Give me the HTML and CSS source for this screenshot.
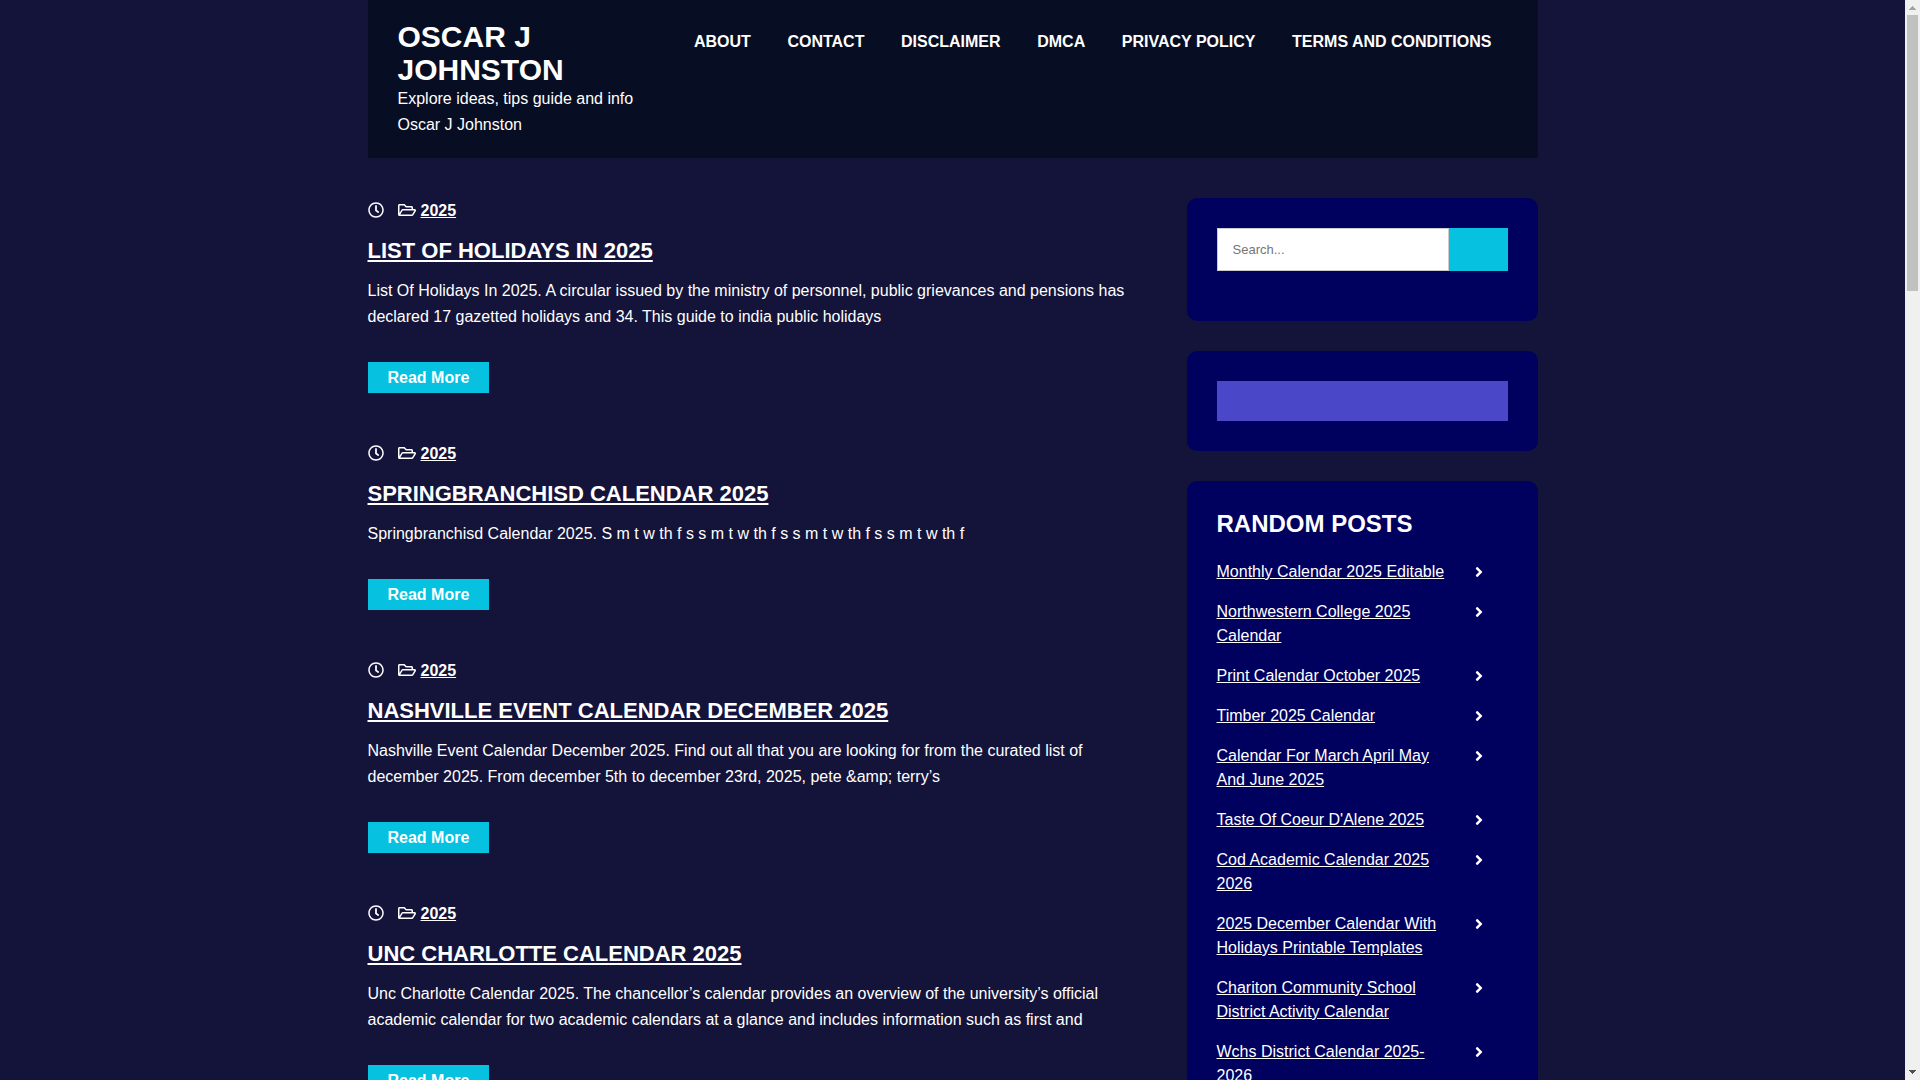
FILE: index.html
```html
<!DOCTYPE html>
<html lang="en">
<head>
<meta charset="utf-8">
<meta name="viewport" content="width=device-width, initial-scale=1">
<title>Oscar J Johnston</title>
<link rel="stylesheet" href="styles.css">
</head>
<body>
<svg class="sprite" aria-hidden="true">
  <symbol id="clock" viewBox="0 0 512 512"><path d="M256 8C119 8 8 119 8 256s111 248 248 248 248-111 248-248S393 8 256 8zm0 448c-110.500 0-200-89.500-200-200S145.500 56 256 56s200 89.500 200 200-89.500 200-200 200zm61.800-104.400l-84.900-61.700c-3.100-2.300-4.900-5.900-4.900-9.700V116c0-6.600 5.400-12 12-12h32c6.600 0 12 5.400 12 12v141.700l66.800 48.600c5.400 3.900 6.500 11.400 2.600 16.800L334.600 349c-3.900 5.300-11.400 6.500-16.800 2.600z"/></symbol>
  <symbol id="folder" viewBox="0 0 576 512"><path d="M527.900 224H480v-48c0-26.500-21.500-48-48-48H272l-64-64H48C21.500 64 0 85.500 0 112v288c0 26.500 21.500 48 48 48h400c16.500 0 31.900-8.500 40.700-22.600l79.900-128c20-31.900-3-73.400-40.700-73.400zM48 118c0-3.300 2.700-6 6-6h134.100l64 64H426c3.300 0 6 2.700 6 6v42H152c-16.800 0-32.400 8.800-41.100 23.200L48 351.400zm400 282H72l77.200-128H528z"/></symbol>
  <symbol id="chevron" viewBox="0 0 256 512"><path d="M224.300 273l-136 136c-9.400 9.400-24.600 9.400-33.900 0l-22.600-22.600c-9.400-9.400-9.400-24.600 0-33.900l96.400-96.400-96.400-96.400c-9.400-9.400-9.400-24.600 0-33.900L54.300 103c9.400-9.400 24.600-9.400 33.900 0l136 136c9.500 9.400 9.500 24.600.1 34z"/></symbol>
</svg>
<div class="window">
  <div class="page">
    <div class="container">
      <header class="header">
        <div class="brand">
          <h1 class="site-title"><a href="#">Oscar J Johnston</a></h1>
          <p class="tagline">Explore ideas, tips guide and info Oscar J Johnston</p>
        </div>
        <nav class="nav" aria-label="Main">
          <a href="#">About</a>
          <a href="#">Contact</a>
          <a href="#">Disclaimer</a>
          <a href="#">DMCA</a>
          <a href="#">Privacy Policy</a>
          <a href="#">Terms and Conditions</a>
        </nav>
      </header>
      <div class="columns">
        <main class="posts">
          <article class="post">
            <div class="meta"><svg class="icon-clock"><use href="#clock"/></svg><svg class="icon-folder"><use href="#folder"/></svg><a href="#">2025</a></div>
            <h2 class="post-title"><a href="#">List Of Holidays In 2025</a></h2>
            <p class="excerpt">List Of Holidays In 2025. A circular issued by the ministry of personnel, public grievances and pensions has declared 17 gazetted holidays and 34. This guide to india public holidays</p>
            <a class="read-more" href="#">Read More</a>
          </article>
          <article class="post">
            <div class="meta"><svg class="icon-clock"><use href="#clock"/></svg><svg class="icon-folder"><use href="#folder"/></svg><a href="#">2025</a></div>
            <h2 class="post-title"><a href="#">Springbranchisd Calendar 2025</a></h2>
            <p class="excerpt">Springbranchisd Calendar 2025. S m t w th f s s m t w th f s s m t w th f s s m t w th f</p>
            <a class="read-more" href="#">Read More</a>
          </article>
          <article class="post">
            <div class="meta"><svg class="icon-clock"><use href="#clock"/></svg><svg class="icon-folder"><use href="#folder"/></svg><a href="#">2025</a></div>
            <h2 class="post-title"><a href="#">Nashville Event Calendar December 2025</a></h2>
            <p class="excerpt">Nashville Event Calendar December 2025. Find out all that you are looking for from the curated list of december 2025. From december 5th to december 23rd, 2025, pete &amp;amp; terry’s</p>
            <a class="read-more" href="#">Read More</a>
          </article>
          <article class="post">
            <div class="meta"><svg class="icon-clock"><use href="#clock"/></svg><svg class="icon-folder"><use href="#folder"/></svg><a href="#">2025</a></div>
            <h2 class="post-title"><a href="#">Unc Charlotte Calendar 2025</a></h2>
            <p class="excerpt">Unc Charlotte Calendar 2025. The chancellor’s calendar provides an overview of the university’s official academic calendar for two academic calendars at a glance and includes information such as first and</p>
            <a class="read-more" href="#">Read More</a>
          </article>
        </main>
        <aside class="sidebar">
          <section class="widget">
            <form class="search">
              <input type="search" placeholder="Search..." aria-label="Search">
              <button type="submit" aria-label="Search"></button>
            </form>
          </section>
          <section class="widget">
            <div class="banner"></div>
          </section>
          <section class="widget">
            <h2 class="widget-title">Random Posts</h2>
            <ul class="links">
              <li><a href="#">Monthly Calendar 2025 Editable</a><svg><use href="#chevron"/></svg></li>
              <li><a href="#">Northwestern College 2025 Calendar</a><svg><use href="#chevron"/></svg></li>
              <li><a href="#">Print Calendar October 2025</a><svg><use href="#chevron"/></svg></li>
              <li><a href="#">Timber 2025 Calendar</a><svg><use href="#chevron"/></svg></li>
              <li><a href="#">Calendar For March April May And June 2025</a><svg><use href="#chevron"/></svg></li>
              <li><a href="#">Taste Of Coeur D'Alene 2025</a><svg><use href="#chevron"/></svg></li>
              <li><a href="#">Cod Academic Calendar 2025 2026</a><svg><use href="#chevron"/></svg></li>
              <li><a href="#">2025 December Calendar With Holidays Printable Templates</a><svg><use href="#chevron"/></svg></li>
              <li><a href="#">Chariton Community School District Activity Calendar</a><svg><use href="#chevron"/></svg></li>
              <li><a href="#">Wchs District Calendar 2025-2026</a><svg><use href="#chevron"/></svg></li>
            </ul>
          </section>
        </aside>
      </div>
    </div>
  </div>
  <div class="scrollbar" aria-hidden="true">
    <svg class="arrow arrow-up" viewBox="0 0 7 4" shape-rendering="crispEdges"><path d="M3 0h1v1h1v1h1v1h1v1H0V3h1V2h1V1h1z"/></svg>
    <div class="thumb"></div>
    <svg class="arrow arrow-down" viewBox="0 0 7 4" shape-rendering="crispEdges"><path d="M0 0h7v1H6v1H5v1H4v1H3V3H2V2H1V1H0z"/></svg>
  </div>
</div>
</body>
</html>
```
FILE: styles.css
```css
* {
  box-sizing: border-box;
}

body {
  margin: 0;
  background: #141339;
  color: #fff;
  font: 16px/26px "Liberation Sans", Arial, sans-serif;
}

h1, h2, p, ul {
  margin: 0;
  padding: 0;
}

a {
  color: inherit;
}

svg {
  fill: currentColor;
}

.sprite {
  display: none;
}

.window {
  display: grid;
  grid-template-columns: minmax(0, 1fr) 15px;
  height: 100vh;
}

.page {
  overflow-y: auto;
  scrollbar-width: none;
}

.container {
  max-width: 1170px;
  margin: 0 auto;
}

.header {
  display: flex;
  align-items: flex-start;
  padding: 20px 30px;
  background: #070d22;
}

.brand {
  flex: 0 0 24%;
}

.site-title {
  font-size: 30px;
  line-height: 33px;
  text-transform: uppercase;
}

.site-title a {
  text-decoration: none;
}

.nav {
  display: flex;
  flex: 1;
  flex-wrap: wrap;
  justify-content: space-between;
  padding: 9px 16px 0 30px;
}

.nav a {
  font-weight: bold;
  text-decoration: none;
  text-transform: uppercase;
}

.columns {
  display: grid;
  grid-template-columns: minmax(0, 1fr) 30%;
  column-gap: 3%;
  padding-top: 40px;
}

.post {
  margin-bottom: 48px;
}

.meta {
  display: flex;
  align-items: center;
  font-weight: bold;
}

.meta svg {
  height: 16px;
  margin-bottom: 2px;
}

.icon-clock {
  width: 16px;
  margin-right: 14px;
}

.icon-folder {
  width: 18px;
  margin-right: 5px;
}

.post-title {
  margin: 15px 0;
  font-size: 22px;
  line-height: 24px;
  text-transform: uppercase;
}

.excerpt {
  margin-bottom: 32px;
}

.read-more {
  display: block;
  width: fit-content;
  padding: 0 20px;
  background: #06c1e0;
  font-weight: bold;
  line-height: 31px;
  text-decoration: none;
}

.widget {
  margin-bottom: 30px;
  padding: 30px;
  border-radius: 10px;
  background: #00005e;
}

.search {
  display: flex;
  margin-bottom: 20px;
}

.search input {
  flex: 1;
  min-width: 0;
  height: 43px;
  padding: 0 15px;
  border: 1px solid #ccc;
  border-radius: 0;
  appearance: none;
  background: #fff;
  font: 13px "Liberation Sans", Arial, sans-serif;
}

.search button {
  width: 59px;
  border: 0;
  background: #06c1e0;
}

.banner {
  height: 40px;
  background: #4a48c8;
}

.widget-title {
  margin-bottom: 23px;
  font-size: 24px;
  line-height: 26px;
  text-transform: uppercase;
}

.links {
  list-style: none;
  line-height: 24px;
}

.links li {
  display: flex;
  justify-content: space-between;
  align-items: flex-start;
  margin-bottom: 16px;
  padding-right: 25px;
}

.links a {
  flex: 0 1 236px;
}

.links svg {
  width: 8px;
  height: 16px;
  margin-top: 4px;
}

.scrollbar {
  display: flex;
  flex-direction: column;
  align-items: center;
  padding: 6px 0;
  background: #f0f0f0;
}

.arrow {
  width: 7px;
  height: 4px;
}

.arrow-up {
  margin-bottom: 5px;
  fill: #a3a3a3;
}

.arrow-down {
  margin-top: auto;
  fill: #505050;
}

.thumb {
  width: 11px;
  height: 276px;
  background: #c1c1c1;
}
```
